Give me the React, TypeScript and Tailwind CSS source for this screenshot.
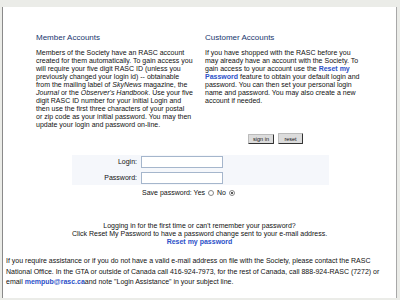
export default function App() {
  const p = "whitespace-nowrap";
  return (
    <div className="w-[400px] h-[300px] bg-[#ebece8] pt-[7px] pl-[2px] pr-[3px] overflow-hidden font-['Liberation_Sans',Arial,sans-serif] text-[#111]">
      <div className="bg-white border-l border-l-[#8a8a8a] border-r border-r-[#a8a8a8] h-[291px]">
        <div className="flex pt-[26px]">
          <div className="ml-[33px] w-[162px]">
            <div className="text-[8px] leading-[10px] text-[#17366e]">Member Accounts</div>
            <div className="mt-[6px] text-[7px] leading-[8px]">
              <div className={p}>Members of the Society have an RASC account</div>
              <div className={p}>created for them automatically. To gain access you</div>
              <div className={p}>will require your five digit RASC ID (unless you</div>
              <div className={p}>previously changed your login id) -- obtainable</div>
              <div className={p}>from the mailing label of <i>SkyNews</i> magazine, the</div>
              <div className={p}><i>Journal</i> or the <i>Observer's Handbook</i>. Use your five</div>
              <div className={p}>digit RASC ID number for your initial Login and</div>
              <div className={p}>then use the first three characters of your postal</div>
              <div className={p}>or zip code as your initial password. You may then</div>
              <div className={p}>update your login and password on-line.</div>
            </div>
          </div>
          <div className="ml-[7px] w-[165px]">
            <div className="text-[8px] leading-[10px] text-[#17366e]">Customer Accounts</div>
            <div className="mt-[6px] text-[7px] leading-[8px]">
              <div className={p}>If you have shopped with the RASC before you</div>
              <div className={p}>may already have an account with the Society. To</div>
              <div className={p}>gain access to your account use the <b className="text-[#2b50c8]">Reset my</b></div>
              <div className={p}><b className="text-[#2b50c8]">Password</b> feature to obtain your default login and</div>
              <div className={p}>password. You can then set your personal login</div>
              <div className={p}>name and password. You may also create a new</div>
              <div className={p}>account if needed.</div>
            </div>
          </div>
        </div>
        <div className="flex items-end pl-[245px] mt-[4px] gap-[4px]">
          <button className="w-[26px] h-[10px] bg-[#dcdcdc] border border-[#333] border-t-[#bbb] border-l-[#bbb] text-[5.5px] leading-[8px] text-[#111] rounded-[1px]">sign in</button>
          <button className="w-[25px] h-[11px] bg-[#dcdcdc] border border-[#333] border-t-[#bbb] border-l-[#bbb] text-[5.5px] leading-[8px] text-[#111] rounded-[1px]">reset</button>
        </div>
        <div className="ml-[69px] w-[257px] mt-[11px] bg-[#f5f7fb] pt-[1px] pb-[1px] text-[7px]">
          <div className="flex items-center h-[12px]">
            <div className="w-[69px] text-right pr-[4px]">Login:</div>
            <div className="w-[82px] h-[12px] bg-white border border-[#a5b6cc]"></div>
          </div>
          <div className="flex items-center h-[12px] mt-[4px]">
            <div className="w-[69px] text-right pr-[4px]">Password:</div>
            <div className="w-[82px] h-[12px] bg-white border border-[#a5b6cc]"></div>
          </div>
        </div>
        <div className="flex items-center pl-[139px] mt-[3px] text-[7px] h-[10px]">
          <span>Save password: Yes</span>
          <span className="ml-[3px] w-[6px] h-[6px] rounded-full border border-[#888] bg-white"></span>
          <span className="ml-[3px]">No</span>
          <span className="ml-[3px] w-[6px] h-[6px] rounded-full border border-[#888] bg-white flex items-center justify-center">
            <span className="w-[2px] h-[2px] rounded-full bg-[#222]"></span>
          </span>
        </div>
        <div className="mt-[24px] text-center text-[7px] leading-[8px]">
          <div>Logging in for the first time or can't remember your password?</div>
          <div>Click Reset My Password to have a password change sent to your e-mail address.</div>
          <div className="font-bold text-[#2b50c8]">Reset my password</div>
        </div>
        <div className="mt-[10px] pl-[3px] text-[7px] leading-[10.5px]">
          <div className={p}>If you require assistance or if you do not have a valid e-mail address on file with the Society, please contact the RASC</div>
          <div className={p}>National Office. In the GTA or outside of Canada call 416-924-7973, for the rest of Canada, call 888-924-RASC (7272) or</div>
          <div className={p}>email <b className="text-[#2b50c8]">mempub@rasc.ca</b>and note "Login Assistance" in your subject line.</div>
        </div>
      </div>
    </div>
  );
}
